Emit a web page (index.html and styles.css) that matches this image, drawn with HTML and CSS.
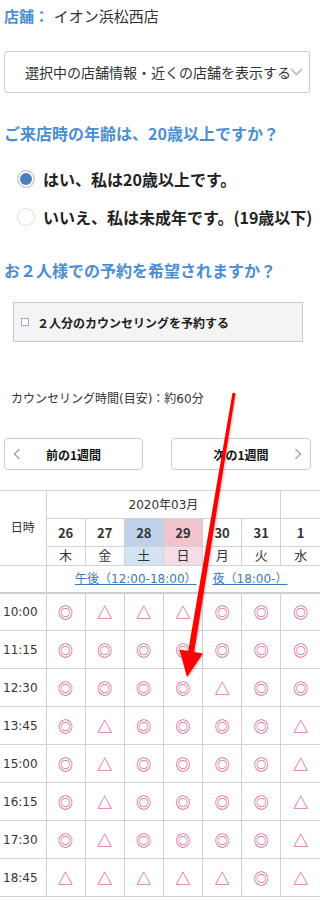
FILE: index.html
```html
<!DOCTYPE html>
<html lang="ja">
<head>
    <meta charset="UTF-8">
    <meta name="viewport" content="width=device-width, initial-scale=1.0">
    <title>カウンセリング予約</title>
    <link rel="stylesheet" href="styles.css">
</head>
<body>
    <div class="page">
        <p class="store"><span class="store-label">店舗：</span> イオン浜松西店</p>

        <div class="store-select">
            <span>選択中の店舗情報・近くの店舗を表示する</span>
            <svg class="select-arrow" width="13" height="8" viewBox="0 0 13 8"><polyline points="1,1 6.5,6.5 12,1" fill="none" stroke="#bbb" stroke-width="1.6"/></svg>
        </div>

        <h2 class="question">ご来店時の年齢は、20歳以上ですか？</h2>
        <ul class="answers">
            <li class="answer"><span class="radio radio-on"></span>はい、私は20歳以上です。</li>
            <li class="answer"><span class="radio"></span>いいえ、私は未成年です。(19歳以下)</li>
        </ul>

        <h2 class="question question-pair">お２人様での予約を希望されますか？</h2>
        <div class="pair-box"><span class="check"></span>２人分のカウンセリングを予約する</div>

        <p class="duration">カウンセリング時間(目安)：約60分</p>

        <div class="week-nav">
            <a href="#" class="week-btn">
                <svg width="8" height="12" viewBox="0 0 8 12"><polyline points="6.5,1 1.5,6 6.5,11" fill="none" stroke="#aaa" stroke-width="1.6"/></svg>
                <span class="week-text">前の1週間</span>
                <span></span>
            </a>
            <a href="#" class="week-btn">
                <span></span>
                <span class="week-text">次の1週間</span>
                <svg class="chev-right" width="8" height="12" viewBox="0 0 8 12"><polyline points="1.5,1 6.5,6 1.5,11" fill="none" stroke="#aaa" stroke-width="1.6"/></svg>
            </a>
        </div>
    </div>

    <table class="calendar">
        <colgroup>
            <col class="col-time">
            <col span="7">
        </colgroup>
        <tr class="row-month">
            <th class="head-label" rowspan="3">日時</th>
            <th colspan="6">2020年03月</th>
            <th></th>
        </tr>
        <tr class="row-date">
            <td>26</td><td>27</td><td class="sat">28</td><td class="sun">29</td><td>30</td><td>31</td><td>1</td>
        </tr>
        <tr class="row-day">
            <td>木</td><td>金</td><td class="sat">土</td><td class="sun">日</td><td>月</td><td>火</td><td>水</td>
        </tr>
        <tr class="row-period">
            <td></td>
            <td colspan="7"><a href="#">午後（12:00-18:00）</a><a href="#" class="night">夜（18:00-）</a></td>
        </tr>
        <tr class="slot"><td class="time">10:00</td><td>◎</td><td>△</td><td>△</td><td>△</td><td>◎</td><td>◎</td><td>◎</td></tr>
        <tr class="slot"><td class="time">11:15</td><td>◎</td><td>◎</td><td>◎</td><td>◎</td><td>◎</td><td>◎</td><td>◎</td></tr>
        <tr class="slot"><td class="time">12:30</td><td>◎</td><td>◎</td><td>◎</td><td>◎</td><td>△</td><td>◎</td><td>◎</td></tr>
        <tr class="slot"><td class="time">13:45</td><td>◎</td><td>△</td><td>◎</td><td>◎</td><td>◎</td><td>◎</td><td>△</td></tr>
        <tr class="slot"><td class="time">15:00</td><td>◎</td><td>△</td><td>◎</td><td>◎</td><td>◎</td><td>◎</td><td>△</td></tr>
        <tr class="slot"><td class="time">16:15</td><td>◎</td><td>△</td><td>◎</td><td>◎</td><td>◎</td><td>◎</td><td>△</td></tr>
        <tr class="slot"><td class="time">17:30</td><td>◎</td><td>△</td><td>◎</td><td>◎</td><td>◎</td><td>◎</td><td>△</td></tr>
        <tr class="slot"><td class="time">18:45</td><td>△</td><td>△</td><td>△</td><td>△</td><td>△</td><td>◎</td><td>△</td></tr>
    </table>

    <!-- 注釈の矢印 -->
    <svg class="annotation" width="320" height="901" viewBox="0 0 320 901">
        <polygon points="232.5,392.8 235.5,393.2 194.2,651.9 203,653.4 187,677 179.4,649.4 188.2,650.9" fill="#ff0000"/>
    </svg>
</body>
</html>
```

FILE: styles.css
```css
* {
    box-sizing: border-box;
}

body {
    margin: 0;
    position: relative;
    overflow-x: hidden;
    font-family: "DejaVu Sans", "Noto Sans CJK JP", sans-serif;
    color: #333;
    background: #fff;
}

.page {
    padding: 0 4px;
}

.store {
    margin: 0;
    font-size: 15px;
    line-height: 32px;
    white-space: nowrap;
}

.store-label {
    color: #4b8ed2;
    font-weight: bold;
    font-family: "Noto Sans CJK JP", sans-serif;
}

.store-select {
    margin-top: 18px;
    width: 306px;
    height: 42px;
    border: 1px solid #ccc;
    border-radius: 3px;
    display: flex;
    align-items: center;
    padding-left: 20px;
    font-size: 14px;
    white-space: nowrap;
}

.select-arrow {
    flex: none;
    margin-left: -1px;
}

.question {
    margin: 28px 0 0;
    font-size: 16px;
    line-height: 24px;
    color: #4b8ed2;
    font-weight: bold;
    font-family: "Noto Sans CJK JP", sans-serif;
    white-space: nowrap;
}

.question-pair {
    margin-top: 22px;
}

.answers {
    list-style: none;
    margin: 15px 0 0;
    padding: 0 0 0 13px;
}

.answer {
    display: flex;
    align-items: center;
    height: 38px;
    font-size: 16px;
    font-weight: bold;
    font-family: "Noto Sans CJK JP", sans-serif;
    white-space: nowrap;
    color: #222;
}

.radio {
    flex: none;
    width: 18px;
    height: 18px;
    border-radius: 50%;
    border: 1px solid #ddd;
    background: #fff;
    margin-right: 8px;
}

.radio-on {
    border-color: #ccc;
    background: #4a7fbf;
    box-shadow: inset 0 0 0 2px #fff;
}

.pair-box {
    margin: 20px 0 0 9px;
    width: 290px;
    height: 40px;
    background: #f4f4f4;
    border: 1px solid #c8c8c8;
    display: flex;
    align-items: center;
    padding-left: 7px;
    font-size: 12px;
    font-weight: bold;
    font-family: "Noto Sans CJK JP", sans-serif;
    color: #222;
}

.check {
    flex: none;
    width: 8px;
    height: 8px;
    border: 1px solid #8eaad6;
    background: #fff;
    margin-right: 8px;
}

.duration {
    margin: 47px 0 0 7px;
    font-size: 12px;
    line-height: 20px;
}

.week-nav {
    display: flex;
    gap: 28px;
    margin-top: 29px;
}

.week-btn {
    width: 139px;
    height: 32px;
    border: 1px solid #ccc;
    border-radius: 4px;
    display: grid;
    grid-template-columns: 12px 1fr 12px;
    align-items: center;
    padding: 0 8px;
    font-size: 12px;
    font-weight: bold;
    font-family: "Noto Sans CJK JP", sans-serif;
    color: #111;
    text-decoration: none;
}

.week-btn + .week-btn {
    width: 140px;
}

.week-text {
    text-align: center;
}

.chev-right {
    justify-self: end;
}

/* カレンダー */
.calendar {
    margin-top: 20px;
    width: 320px;
    border-collapse: collapse;
    table-layout: fixed;
}

.col-time {
    width: 46px;
}

.calendar th,
.calendar td {
    border: 1px solid #d2d2d2;
    padding: 0;
    text-align: center;
    vertical-align: middle;
    line-height: 16px;
}

.calendar tr > :first-child {
    border-left: 0;
}

.calendar tr > :last-child {
    border-right: 0;
}

.calendar th {
    font-size: 12px;
    font-weight: normal;
}

.row-month th {
    height: 28px;
}

.row-date td {
    height: 28px;
    font-size: 13px;
    font-weight: bold;
    font-family: "Noto Sans CJK JP", sans-serif;
}

.row-day td {
    height: 19px;
    font-size: 13px;
}

.row-date .sat {
    background: #bfd1e8;
}

.row-date .sun {
    background: #efc4cd;
}

.row-day .sat {
    background: #d4e3f3;
}

.row-day .sun {
    background: #f4dde5;
}

.row-period td {
    height: 27px;
    font-size: 12px;
    border-bottom: 2px solid #cfcfcf;
    white-space: nowrap;
}

.row-period a {
    color: #3b78bd;
}

.row-period .night {
    margin-left: 16px;
    padding-right: 4px;
}

.slot td {
    height: 38px;
    font-size: 15px;
    color: #d9336b;
    font-family: "Noto Sans CJK JP", sans-serif;
}

.slot .time {
    text-align: left;
    padding-left: 3px;
    font-size: 12px;
    color: #333;
    font-family: "DejaVu Sans", sans-serif;
}

.annotation {
    position: absolute;
    top: 0;
    left: 0;
    pointer-events: none;
    filter: drop-shadow(1px 1px 1px rgba(0, 0, 0, 0.25));
}
```
